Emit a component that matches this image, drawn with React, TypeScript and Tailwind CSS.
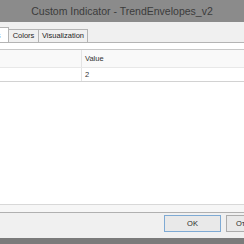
import React from "react";

export default function App() {
  return (
    <div className="w-[244px] h-[244px] overflow-hidden flex flex-col bg-[#f0f0f0] font-['Liberation_Sans',Arial,sans-serif] text-[#1e1e1e]">
      {/* Title bar */}
      <div className="h-[22px] shrink-0 bg-[#8b8b8b] flex items-center justify-center text-[10.5px] text-[#3b3b3b] pt-[1px]">
        Custom Indicator - TrendEnvelopes_v2
      </div>

      {/* Tabs strip */}
      <div className="h-[21px] shrink-0 flex items-end border-b border-[#b4b4b4] overflow-hidden">
        <div className="relative z-10 -mb-px h-[16px] w-[34px] -ml-[25px] shrink-0 bg-white border border-b-0 border-[#b4b4b4] flex items-center pl-[4px] text-[7.5px]">
          Inputs
        </div>
        <div className="h-[13px] w-[30px] shrink-0 bg-[#f0f0f0] border border-l-0 border-b-0 border-[#b4b4b4] flex items-center justify-center text-[7.5px]">
          Colors
        </div>
        <div className="h-[13px] w-[49px] shrink-0 bg-[#f0f0f0] border border-l-0 border-b-0 border-[#b4b4b4] flex items-center justify-center text-[7.5px]">
          Visualization
        </div>
      </div>

      {/* Tab page */}
      <div className="h-[161px] shrink-0 bg-white pt-[6px] flex flex-col">
        <div className="flex flex-col border-t border-[#c8c8c8]">
          <div className="h-[18px] flex bg-[#f9f9f9] border-b border-[#e8e8e8] text-[7.5px] text-[#333]">
            <div className="w-[82px] border-r border-[#e3e3e3]" />
            <div className="flex-1 flex items-center pl-[3px]">Value</div>
          </div>
          <div className="h-[14px] flex bg-white border-b border-[#d2d2d2] text-[7.5px] text-[#333]">
            <div className="w-[82px] border-r border-[#e3e3e3]" />
            <div className="flex-1 flex items-center pl-[3px]">2</div>
          </div>
        </div>
      </div>

      {/* Separator lines */}
      <div className="h-[1px] shrink-0 bg-[#d8d8d8]" />
      <div className="h-[7px] shrink-0 bg-[#f6f6f6]" />
      <div className="h-[1px] shrink-0 bg-[#b0b0b0]" />

      {/* Button area */}
      <div className="h-[25px] shrink-0 flex items-start pt-[2px] pl-[164px] gap-[5px]">
        <div className="h-[17px] w-[57px] shrink-0 border border-[#7eaad4] bg-[#e9e9e9] flex items-center justify-center text-[7.5px] text-[#2a2a2a]">
          OK
        </div>
        <div className="h-[17px] w-[57px] shrink-0 border border-[#acacac] bg-[#e9e9e9] flex items-center justify-start pl-[9px] text-[7.5px] text-[#2a2a2a]">
          Отмена
        </div>
      </div>

      {/* Bottom dark bar */}
      <div className="flex-1 bg-[#7b7b7b]" />
    </div>
  );
}
